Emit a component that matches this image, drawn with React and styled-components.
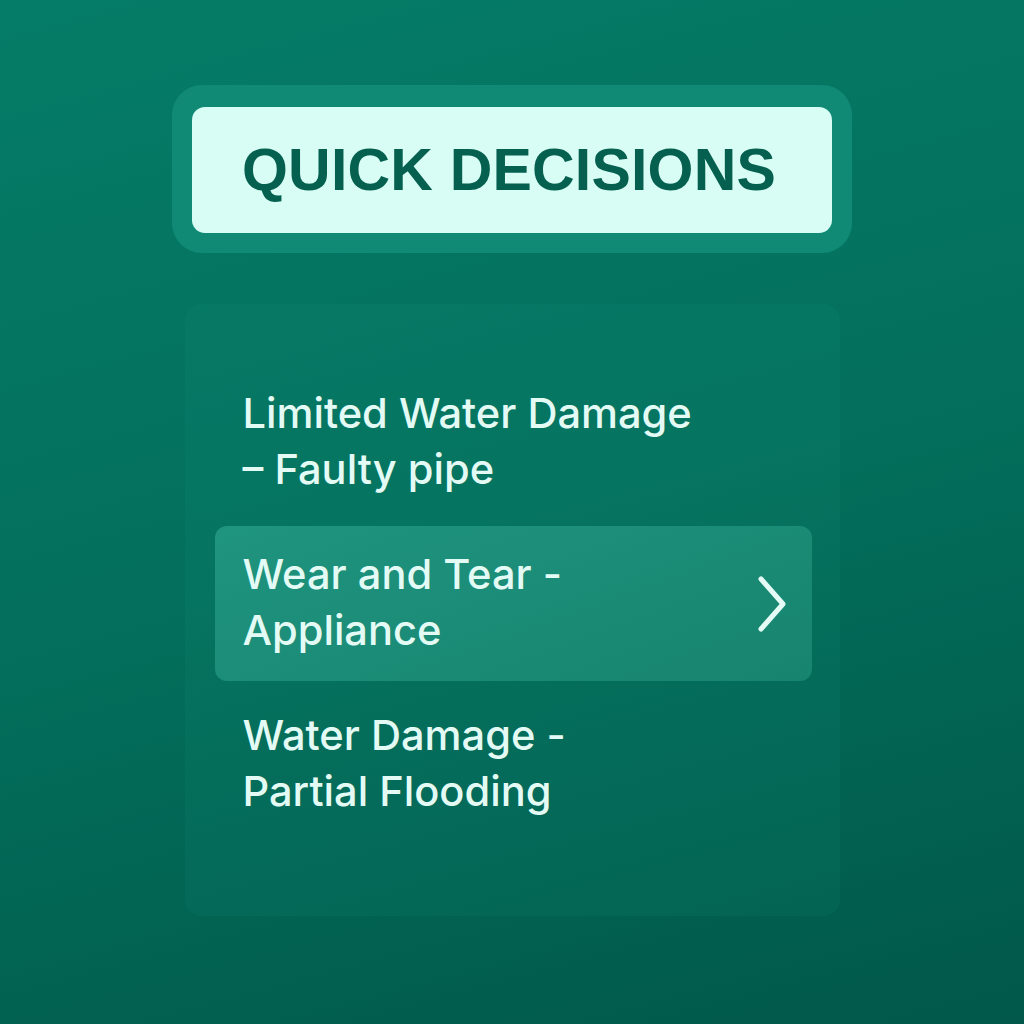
import React from 'react'
import styled, { createGlobalStyle } from 'styled-components'

const GlobalStyle = createGlobalStyle`
    html, body {
        margin: 0;
        padding: 0;
    }
    body {
        font-family: Inter, "Noto Sans", sans-serif;
    }
`

const Page = styled.div`
    width: 1024px;
    height: 1024px;
    background: linear-gradient(165deg, #057c67 0%, #036f5c 50%, #01584a 100%);
    display: flex;
    flex-direction: column;
    align-items: center;
    padding-top: 85px;
    box-sizing: border-box;
`

const HeaderFrame = styled.div`
    width: 680px;
    height: 168px;
    box-sizing: border-box;
    padding: 22px 20px 20px;
    background-color: #108a75;
    border-radius: 30px;
    display: flex;
`

const HeaderInner = styled.div`
    flex: 1;
    background-color: #d8fdf5;
    border-radius: 13px;
    display: flex;
    align-items: center;
    padding-left: 50px;
`

const Title = styled.h1`
    margin: 0;
    font-family: "Liberation Sans", Arial, sans-serif;
    font-weight: 700;
    font-size: 59px;
    letter-spacing: 0.2px;
    color: #05604f;
`

const Card = styled.div`
    margin-top: 51px;
    width: 655px;
    height: 612px;
    box-sizing: border-box;
    background-color: rgba(40, 190, 160, 0.07);
    border-radius: 16px;
    padding: 61px 28px 0 30px;
    display: flex;
    flex-direction: column;
    gap: 6px;
`

const Row = styled.div`
    height: 155px;
    box-sizing: border-box;
    border-radius: 12px;
    padding: 0 24px 0 28px;
    display: flex;
    align-items: center;
    justify-content: space-between;
    background: ${p => (p.$active ? 'linear-gradient(160deg, #1f947f 0%, #17846f 100%)' : 'transparent')};
`

const Label = styled.div`
    font-family: Inter, "Noto Sans", sans-serif;
    font-size: 41.6px;
    font-weight: 500;
    line-height: 56px;
    color: #e3fbf4;
    margin-top: -4px;
`

const Chevron = () => (
    <svg width="34" height="56" viewBox="0 0 34 56" fill="none">
        <path d="M7 3 L29 28 L7 53" stroke="#e3fbf4" strokeWidth="5" strokeLinecap="round" strokeLinejoin="round" />
    </svg>
)

const items = [
    { lines: ['Limited Water Damage', '– Faulty pipe'] },
    { lines: ['Wear and Tear -', 'Appliance'], active: true },
    { lines: ['Water Damage -', 'Partial Flooding'] },
]

const App = () => {
    return (
        <Page>
            <GlobalStyle />
            <HeaderFrame>
                <HeaderInner>
                    <Title>QUICK DECISIONS</Title>
                </HeaderInner>
            </HeaderFrame>
            <Card>
                {items.map((item, i) => (
                    <Row key={i} $active={item.active}>
                        <Label>
                            {item.lines[0]}
                            <br />
                            {item.lines[1]}
                        </Label>
                        {item.active && <Chevron />}
                    </Row>
                ))}
            </Card>
        </Page>
    )
}

export default App
